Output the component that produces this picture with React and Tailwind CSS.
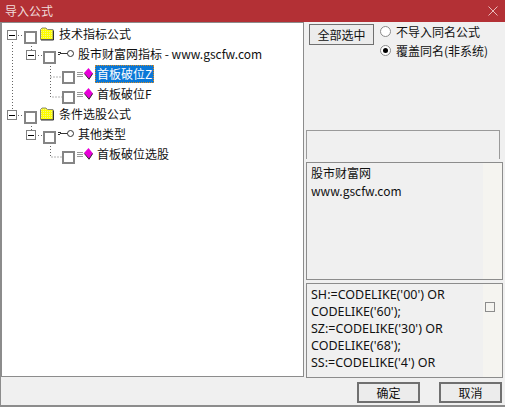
const font = { fontFamily: '"Noto Sans CJK SC", sans-serif' };
const latin = { fontFamily: '"Noto Sans", "Noto Sans CJK SC", sans-serif' };

function Expander() {
    return (
        <span className="w-[10px] h-[10px] border border-[#808080] bg-white flex items-center justify-center shrink-0">
            <span className="w-[6px] h-px bg-black"></span>
        </span>
    );
}

function Check() {
    return <span className="block w-[13px] h-[13px] border-2 border-[#858585] bg-white shrink-0"></span>;
}

function Folder() {
    return (
        <svg width="16" height="14" viewBox="0 0 16 14" className="block shrink-0">
            <defs>
                <pattern id="dither" width="2" height="2" patternUnits="userSpaceOnUse">
                    <rect width="2" height="2" fill="#ffff00" />
                    <rect width="1" height="1" fill="#f4f48c" />
                </pattern>
            </defs>
            <path d="M1.5 12.5V2.5L3 1h4l1.5 1.5H14V12.5z" fill="url(#dither)" stroke="#8a8a78" />
            <path d="M14.5 3.5v9.5H2" fill="none" stroke="#333" />
        </svg>
    );
}

function KeyIcon() {
    return (
        <svg width="16" height="9" viewBox="0 0 16 9" className="block shrink-0">
            <path d="M0 3.5h3M0 5.5h2M2 4.5h8" stroke="#333" fill="none" />
            <circle cx="12.5" cy="4.5" r="3" fill="#fff" stroke="#333" />
        </svg>
    );
}

function Gem() {
    return (
        <svg width="16" height="12" viewBox="0 0 16 12" className="block shrink-0">
            <path d="M0 4.5h6M0 6.5h6M0 8.5h6" stroke="#999" />
            <path d="M11.5 0L16 5.5L12 11.5L7 5z" fill="#e800d8" />
            <path d="M15.7 5.5L12 11.2L7.3 5.5" fill="none" stroke="#303030" />
        </svg>
    );
}

function Row({ indent, expander, icon, selected, children }) {
    return (
        <div className={`flex items-center h-5 ${indent}`}>
            {expander ? <Expander /> : null}
            <span className={expander ? 'ml-[7px]' : ''}>
                <span className="block mt-[4px]">
                    <Check />
                </span>
            </span>
            <span className="ml-[2px] -mt-[3px]">{icon}</span>
            {selected ? (
                <span className="ml-[2px] px-[1px] h-[18px] leading-[16px] bg-[#0a78d7] text-white border border-dotted border-[#d98a20] -mt-[2px]">
                    {children}
                </span>
            ) : (
                <span className="ml-[4px] -mt-[2px]">{children}</span>
            )}
        </div>
    );
}

function TreeLines() {
    return (
        <svg width="110" height="150" viewBox="0 0 110 150" className="absolute left-0 top-0">
            <g stroke="#666" strokeDasharray="1 2" fill="none">
                <path d="M10.5 16V88" />
                <path d="M16 12.5H23" />
                <path d="M16 92.5H23" />
                <path d="M29.5 20V28" />
                <path d="M36 32.5H42" />
                <path d="M29.5 100V108" />
                <path d="M36 112.5H42" />
                <path d="M48.5 40V74H61" />
                <path d="M48.5 54H61" />
                <path d="M48.5 120V134H61" />
            </g>
        </svg>
    );
}

function Radio({ checked, children }) {
    return (
        <div className="flex items-center h-[19px]">
            <span className="w-[11px] h-[11px] rounded-full border border-[#8a8a8a] bg-white flex items-center justify-center shrink-0">
                {checked ? <span className="w-[5px] h-[5px] rounded-full bg-black"></span> : null}
            </span>
            <span className="ml-[5px]">{children}</span>
        </div>
    );
}

function BottomButton({ children }) {
    return (
        <button className="w-[63px] h-[21px] border-2 border-[#707070] bg-[#ececec] text-xs text-[#111] leading-none">
            {children}
        </button>
    );
}

export default function App() {
    return (
        <div className="w-[505px] h-[407px] bg-[#f0f0f0] flex flex-col text-xs text-[#111] overflow-hidden border-b-2 border-[#8c8c8c]" style={font}>
            <header className="h-[22px] bg-[#b33035] flex items-center justify-between pl-[5px] pr-[5px] text-[#f0dcdc] shrink-0">
                <span>导入公式</span>
                <svg width="10" height="10" viewBox="0 0 10 10" className="mr-[2px]">
                    <path d="M0.5 0.5L9.5 9.5M9.5 0.5L0.5 9.5" stroke="#eec9c9" strokeWidth="0.9" />
                </svg>
            </header>

            <div className="flex flex-1 pr-[2px] gap-[2px] border-l border-[#8c8c8c] min-h-0">
                <div className="w-[303px] h-[355px] border border-[#8c8c8c] bg-white relative pt-[2px] shrink-0">
                    <TreeLines />
                    <div className="relative">
                        <Row indent="pl-[5px]" expander icon={<Folder />}>技术指标公式</Row>
                        <Row indent="pl-[24px]" expander icon={<KeyIcon />}>股市财富网指标 - www.gscfw.com</Row>
                        <Row indent="pl-[60px]" selected icon={<Gem />}>首板破位Z</Row>
                        <Row indent="pl-[60px]" icon={<Gem />}>首板破位F</Row>
                        <Row indent="pl-[5px]" expander icon={<Folder />}>条件选股公式</Row>
                        <Row indent="pl-[24px]" expander icon={<KeyIcon />}>其他类型</Row>
                        <Row indent="pl-[60px]" icon={<Gem />}>首板破位选股</Row>
                    </div>
                </div>

                <div className="flex-1 flex flex-col min-w-0">
                    <div className="flex pl-[3px] pt-[2px] gap-[6px] h-[108px] shrink-0">
                        <button className="w-[65px] h-[21px] border border-[#707070] bg-[#ececec] text-xs leading-none">全部选中</button>
                        <div className="-mt-[2px]">
                            <Radio>不导入同名公式</Radio>
                            <Radio checked>覆盖同名(非系统)</Radio>
                        </div>
                    </div>
                    <div className="h-[29px] mr-[3px] border border-b-0 border-[#9a9a9a] shrink-0"></div>
                    <div className="mt-[3px] h-[118px] border border-[#8c8c8c] flex shrink-0">
                        <div className="flex-1 pl-[4px] pt-[1px] leading-[18px] bg-[#f0f0f0]">
                            股市财富网
                            <br />
                            www.gscfw.com
                        </div>
                        <div className="w-[19px] bg-[#f5f4f0]"></div>
                    </div>
                    <div className="mt-[3px] h-[95px] border border-[#8c8c8c] flex shrink-0">
                        <div className="flex-1 pl-[4px] pt-[2px] text-[12.5px] leading-[17px] bg-[#f0f0f0] overflow-hidden" style={latin}>
                            SH:=CODELIKE('00') OR
                            <br />
                            CODELIKE('60');
                            <br />
                            SZ:=CODELIKE('30') OR
                            <br />
                            CODELIKE('68');
                            <br />
                            SS:=CODELIKE('4') OR
                        </div>
                        <div className="w-[19px] bg-[#f5f4f0] pt-[18px] pl-[2px]">
                            <span className="block w-[10px] h-[10px] border border-[#8c8c8c]"></span>
                        </div>
                    </div>
                </div>
            </div>

            <div className="h-[27px] flex justify-end items-start pr-[3px] pt-[4px] gap-[19px] shrink-0 border-l border-[#8c8c8c]">
                <BottomButton>确定</BottomButton>
                <BottomButton>取消</BottomButton>
            </div>
        </div>
    );
}
